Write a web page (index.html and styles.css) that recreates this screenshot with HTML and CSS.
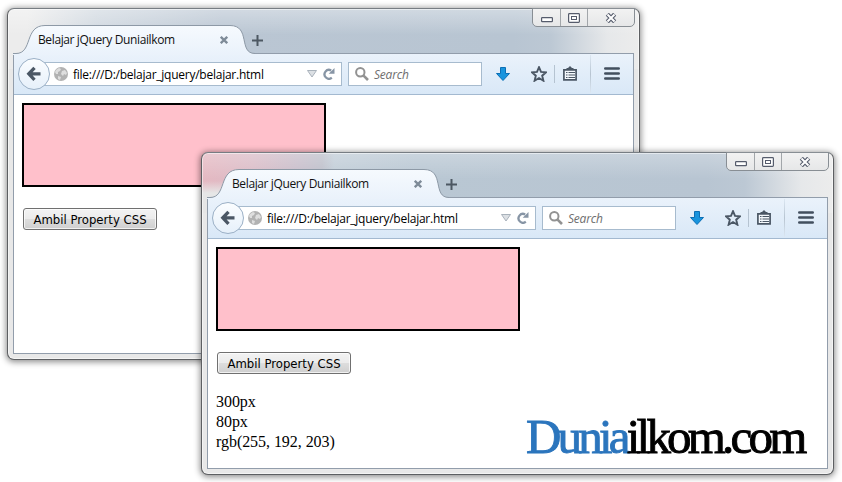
FILE: index.html
```html
<!DOCTYPE html>
<html lang="id">
<head>
<meta charset="utf-8">
<title>Belajar jQuery Duniailkom</title>
<link rel="stylesheet" href="styles.css">
</head>
<body>
<svg class="defs" width="0" height="0" aria-hidden="true">
  <defs>
    <linearGradient id="tabfill" x1="0" y1="0" x2="0" y2="1"><stop offset="0" stop-color="#f6fafe"/><stop offset="1" stop-color="#eaf2fb"/></linearGradient>
    <symbol id="tab" viewBox="0 0 242 30"><path d="M0 28.500H3C20 28.500 11 .5 32 .5H217C238 .5 225 28.500 242 28.500V30H0Z" fill="url(#tabfill)"/><path d="M0 28.500H3C20 28.500 11 .5 32 .5H217C238 .5 225 28.500 242 28.500" fill="none" stroke="#8d99a6"/></symbol>
    <symbol id="cross" viewBox="0 0 8 8"><path d="M.8 .8l6.400 6.400M7.200 .8l-6.400 6.400" stroke="#7e8b98" stroke-width="2.300"/></symbol>
    <symbol id="plus" viewBox="0 0 11 11"><path d="M5.500 0v11M0 5.500h11" stroke="#4d5863" stroke-width="2"/></symbol>
    <symbol id="back" viewBox="0 0 16 16"><path d="M8.500 1.800L2.800 7.800l5.700 6M3 7.800h11.500" fill="none" stroke="#4b5765" stroke-width="3.300"/></symbol>
    <symbol id="globe" viewBox="0 0 14 14"><circle cx="7" cy="7" r="7" fill="#b2b2b2"/><path d="M2 3l3-2 2 1-1 2-2 1v2H2L1 5zM8 4l3-1 2 3-1 2-2-1-1 2-2-2zM4 9l3 1-1 3-2-1z" fill="#dedede"/></symbol>
    <symbol id="drop" viewBox="0 0 10 8"><path d="M.5 .5h9L5 7z" fill="#dce0e4" stroke="#a9b2bb"/></symbol>
    <symbol id="reload" viewBox="0 0 12 12"><path d="M8.800 9.700A4.400 4.400 0 1 1 8.200 2.500" fill="none" stroke="#8795a5" stroke-width="2.300"/><path d="M11.500 0v5.800H5.700z" fill="#8795a5"/></symbol>
    <symbol id="lens" viewBox="0 0 14 14"><circle cx="5.300" cy="5.300" r="4.200" fill="none" stroke="#929292" stroke-width="2"/><path d="M8.300 8.300l4.700 4.700" stroke="#929292" stroke-width="2.600"/></symbol>
    <symbol id="down" viewBox="0 0 14 14"><path d="M4.500 .5h5v6h4L7 13.500.5 6.500h4z" fill="#1994dd" stroke="#0c6fb5"/></symbol>
    <symbol id="star" viewBox="0 0 16 16"><path d="M8 1.200l2 4.700 5 .4-3.800 3.400 1.200 5L8 12l-4.400 2.700 1.200-5L1 6.300l5-.4z" fill="none" stroke="#4b5765" stroke-width="1.900"/></symbol>
    <symbol id="list" viewBox="0 0 14 15"><path d="M.9 3.900h12.200v10H.9z" fill="#f4f8fc" stroke="#4b5765" stroke-width="1.700"/><path d="M3.500 3.500V2H5L7 0l2 2h1.500v1.500z" fill="#4b5765"/><path d="M3 6.500h1.500M3 9h1.500M3 11.500h1.500M5.500 6.500H12M5.500 9H12M5.500 11.500H12" stroke="#4b5765"/></symbol>
    <symbol id="menu" viewBox="0 0 16 13"><path d="M1.300 1.500h13.400M1.300 6.500h13.400M1.300 11.500h13.400" stroke="#424f5e" stroke-width="2.600" stroke-linecap="round"/></symbol>
    <symbol id="min" viewBox="0 0 12 6"><rect x=".6" y=".6" width="10.800" height="4" rx=".6" fill="#fff" stroke="#565c6c" stroke-width="1.200"/></symbol>
    <symbol id="max" viewBox="0 0 12 10"><rect x=".6" y=".6" width="10.800" height="8.800" rx=".8" fill="#fff" stroke="#565c6c" stroke-width="1.200"/><rect x="3.500" y="3.500" width="5" height="3" fill="#fff" stroke="#565c6c"/></symbol>
    <symbol id="close" viewBox="0 0 12 10"><path d="M2.300 1.200l7.400 7.600M9.700 1.200L2.300 8.800" stroke="#565c6c" stroke-width="4.200"/><path d="M2.500 1.500l7 7M9.500 1.500l-7 7" stroke="#fff" stroke-width="2"/></symbol>
  </defs>
</svg>

<section class="window first">
  <header class="titlebar">
    <div class="tab"><svg class="shape"><use href="#tab"/></svg><span class="title">Belajar jQuery Duniailkom</span><svg class="cross"><use href="#cross"/></svg></div>
    <svg class="plus"><use href="#plus"/></svg>
    <div class="controls"><span><svg class="min"><use href="#min"/></svg></span><span><svg><use href="#max"/></svg></span><span><svg><use href="#close"/></svg></span></div>
  </header>
  <div class="panel">
    <nav class="toolbar">
      <div class="back"><svg><use href="#back"/></svg></div>
      <div class="url"><svg class="globe"><use href="#globe"/></svg><span class="address">file:///D:/belajar_jquery/belajar.html</span><svg class="drop"><use href="#drop"/></svg><svg class="reload"><use href="#reload"/></svg></div>
      <div class="search"><svg><use href="#lens"/></svg><span>Search</span></div>
      <svg class="down"><use href="#down"/></svg>
      <svg class="star"><use href="#star"/></svg>
      <i class="rule"></i>
      <svg class="list"><use href="#list"/></svg>
      <i class="rule tall"></i>
      <svg class="menu"><use href="#menu"/></svg>
    </nav>
    <main class="page">
      <div class="box"></div>
      <button class="btn" type="button"><span>Ambil Property CSS</span></button>
    </main>
  </div>
</section>

<section class="window second">
  <header class="titlebar">
    <div class="tab"><svg class="shape"><use href="#tab"/></svg><span class="title">Belajar jQuery Duniailkom</span><svg class="cross"><use href="#cross"/></svg></div>
    <svg class="plus"><use href="#plus"/></svg>
    <div class="controls"><span><svg class="min"><use href="#min"/></svg></span><span><svg><use href="#max"/></svg></span><span><svg><use href="#close"/></svg></span></div>
  </header>
  <div class="panel">
    <nav class="toolbar">
      <div class="back"><svg><use href="#back"/></svg></div>
      <div class="url"><svg class="globe"><use href="#globe"/></svg><span class="address">file:///D:/belajar_jquery/belajar.html</span><svg class="drop"><use href="#drop"/></svg><svg class="reload"><use href="#reload"/></svg></div>
      <div class="search"><svg><use href="#lens"/></svg><span>Search</span></div>
      <svg class="down"><use href="#down"/></svg>
      <svg class="star"><use href="#star"/></svg>
      <i class="rule"></i>
      <svg class="list"><use href="#list"/></svg>
      <i class="rule tall"></i>
      <svg class="menu"><use href="#menu"/></svg>
    </nav>
    <main class="page">
      <div class="box"></div>
      <button class="btn" type="button"><span>Ambil Property CSS</span></button>
      <div class="result">300px<br>80px<br>rgb(255, 192, 203)</div>
      <div class="logo"><span class="dunia">Dunia</span><span>ilkom.com</span></div>
    </main>
  </div>
</section>
</body>
</html>
```

FILE: styles.css
```css
* { box-sizing: border-box; }
body { margin: 0; width: 842px; height: 482px; overflow: hidden; position: relative; background: #fff; font-family: "Open Sans", sans-serif; }
svg { display: block; flex: none; }
.defs { position: absolute; }

.window {
  position: absolute;
  width: 633px;
  padding: 0 5px 5px;
  display: flex;
  flex-direction: column;
  border: 1px solid #5d5f62;
  border-top-color: #777d83;
  border-radius: 7px;
  box-shadow: 0 1px 6px 1px rgba(0, 0, 0, .45), inset 0 0 0 1px rgba(255, 255, 255, .5);
}
.first {
  left: 7px; top: 8px; height: 352px;
  background: linear-gradient(to bottom, rgba(255,255,255,.35), rgba(255,255,255,0) 26px) 0 0 / 100% 44px no-repeat,
    linear-gradient(to right, #ececec 3%, #d0d8e0 14%, #bac6d3 34%, #b8c5d2 80%, #bcc8d4 86%, #e6e8ea 95%, #ececec) 0 0 / 100% 60px no-repeat, #e8e8e8;
}
.second {
  left: 201px; top: 152px; height: 323px;
  background: linear-gradient(to bottom, rgba(255,255,255,.25), rgba(255,255,255,0) 26px) 0 0 / 100% 44px no-repeat,
    linear-gradient(to bottom, rgba(232,232,232,0) 28px, #e6e6e6 40px) 0 0 / 30px 60px no-repeat,
    linear-gradient(to right, #e5b9c2 0, #dabcc7 8%, #c8bdca 15%, #bdbfca 19%, rgba(184,197,210,0) 21%) 0 0 / 100% 44px no-repeat,
    linear-gradient(to right, #ececec 3%, #c5d0da 14%, #b9c7d3 34%, #b8c5d2 80%, #bcc8d4 86%, #e6e8ea 95%, #ececec) 0 0 / 100% 60px no-repeat, #e8e8e8;
}

.titlebar { height: 44px; flex: none; display: flex; }
.tab { position: relative; width: 242px; height: 30px; margin: 16px 0 -2px; padding-left: 25px; display: flex; align-items: center; flex: none; z-index: 1; }
.shape { position: absolute; left: 0; top: 0; width: 242px; height: 30px; }
.title { position: relative; width: 182px; font-size: 12px; line-height: 16px; white-space: nowrap; letter-spacing: -.38px; color: #111; }
.cross { position: relative; width: 8px; height: 8px; }
.plus { width: 11px; height: 11px; margin: 26px 0 0 -3px; }
.controls { display: flex; width: 103px; height: 19px; margin: -1px 0 0 auto; border: 1px solid #888e94; border-radius: 0 0 5px 5px; background: linear-gradient(#f2f2f2, #e6e7e8); position: relative; left: 1px; }
.controls span { width: 28px; display: flex; align-items: center; justify-content: center; border-right: 1px solid #a2a6aa; }
.controls span:nth-child(2) { width: 27px; }
.controls span:last-child { flex: 1; border: 0; }
.controls svg { width: 12px; height: 10px; }
.controls .min { height: 6px; margin-top: 5px; }

.panel { flex: 1; min-height: 0; border: 1px solid #929dab; background: #fff; display: flex; flex-direction: column; }
.toolbar { height: 41px; flex: none; display: flex; align-items: center; padding-left: 4px; background: linear-gradient(#eaf2fb, #d9e8f7); border-bottom: 1px solid #a3b9d0; }
.back { width: 32px; height: 32px; border: 1px solid #9bb0c6; border-radius: 50%; background: linear-gradient(#fbfdff, #e6f0fa); display: flex; align-items: center; justify-content: center; position: relative; z-index: 1; }
.back svg { width: 16px; height: 16px; }
.url, .search { height: 24px; border: 1px solid #a7bbce; background: #fff; display: flex; align-items: center; }
.url { width: 302px; margin-left: -10px; padding-left: 13px; }
.globe { width: 14px; height: 14px; }
.address { width: 234px; margin: 1px 0 0 5px; font-size: 12px; line-height: 16px; letter-spacing: -.25px; white-space: nowrap; color: #000; }
.drop { width: 10px; height: 8px; }
.reload { width: 12px; height: 12px; margin-left: 6px; }
.search { width: 134px; margin-left: 6px; padding-left: 6px; font-size: 12px; font-style: italic; color: #6e6e6e; gap: 5px; }
.search svg { width: 14px; height: 14px; }
.search span { letter-spacing: -.2px; }
.down { width: 14px; height: 14px; margin-left: 14px; }
.star { width: 16px; height: 16px; margin-left: 21px; }
.rule { width: 1px; height: 18px; margin-left: 7px; background: #b5c3d1; }
.list { width: 14px; height: 15px; margin: -2px 0 0 8px; }
.tall { height: 38px; margin-left: 13px; background: linear-gradient(#dce7f2, #b7c4d1, #dce7f2); }
.menu { width: 16px; height: 13px; margin: -1px 0 0 13px; }

.page { position: relative; flex: 1; padding: 8px 8px 0; }
.box { width: 304px; height: 84px; background: #ffc0cb; border: 2px solid #000; }
.btn { display: flex; align-items: center; justify-content: center; width: 134px; height: 22px; margin: 21px 0 0 1px; padding: 0; border: 1px solid #707070; border-radius: 3px; background: linear-gradient(#f3f3f3, #ebebeb 49%, #dddddd 51%, #cfcfcf); box-shadow: inset 0 0 0 1px rgba(255,255,255,.7); color: #000; font: 13px "DejaVu Sans Condensed", "DejaVu Sans", sans-serif; font-stretch: condensed; white-space: nowrap; }
.result { margin-top: 18px; font: 16px/20px "Liberation Serif", serif; letter-spacing: -.05px; color: #000; }
.logo { position: absolute; left: 318px; bottom: 3px; display: flex; font: 49px/56px "Liberation Serif", serif; letter-spacing: -3.8px; color: #000; -webkit-text-stroke: .9px currentColor; white-space: nowrap; }
.dunia { color: #2b75bd; }
```
